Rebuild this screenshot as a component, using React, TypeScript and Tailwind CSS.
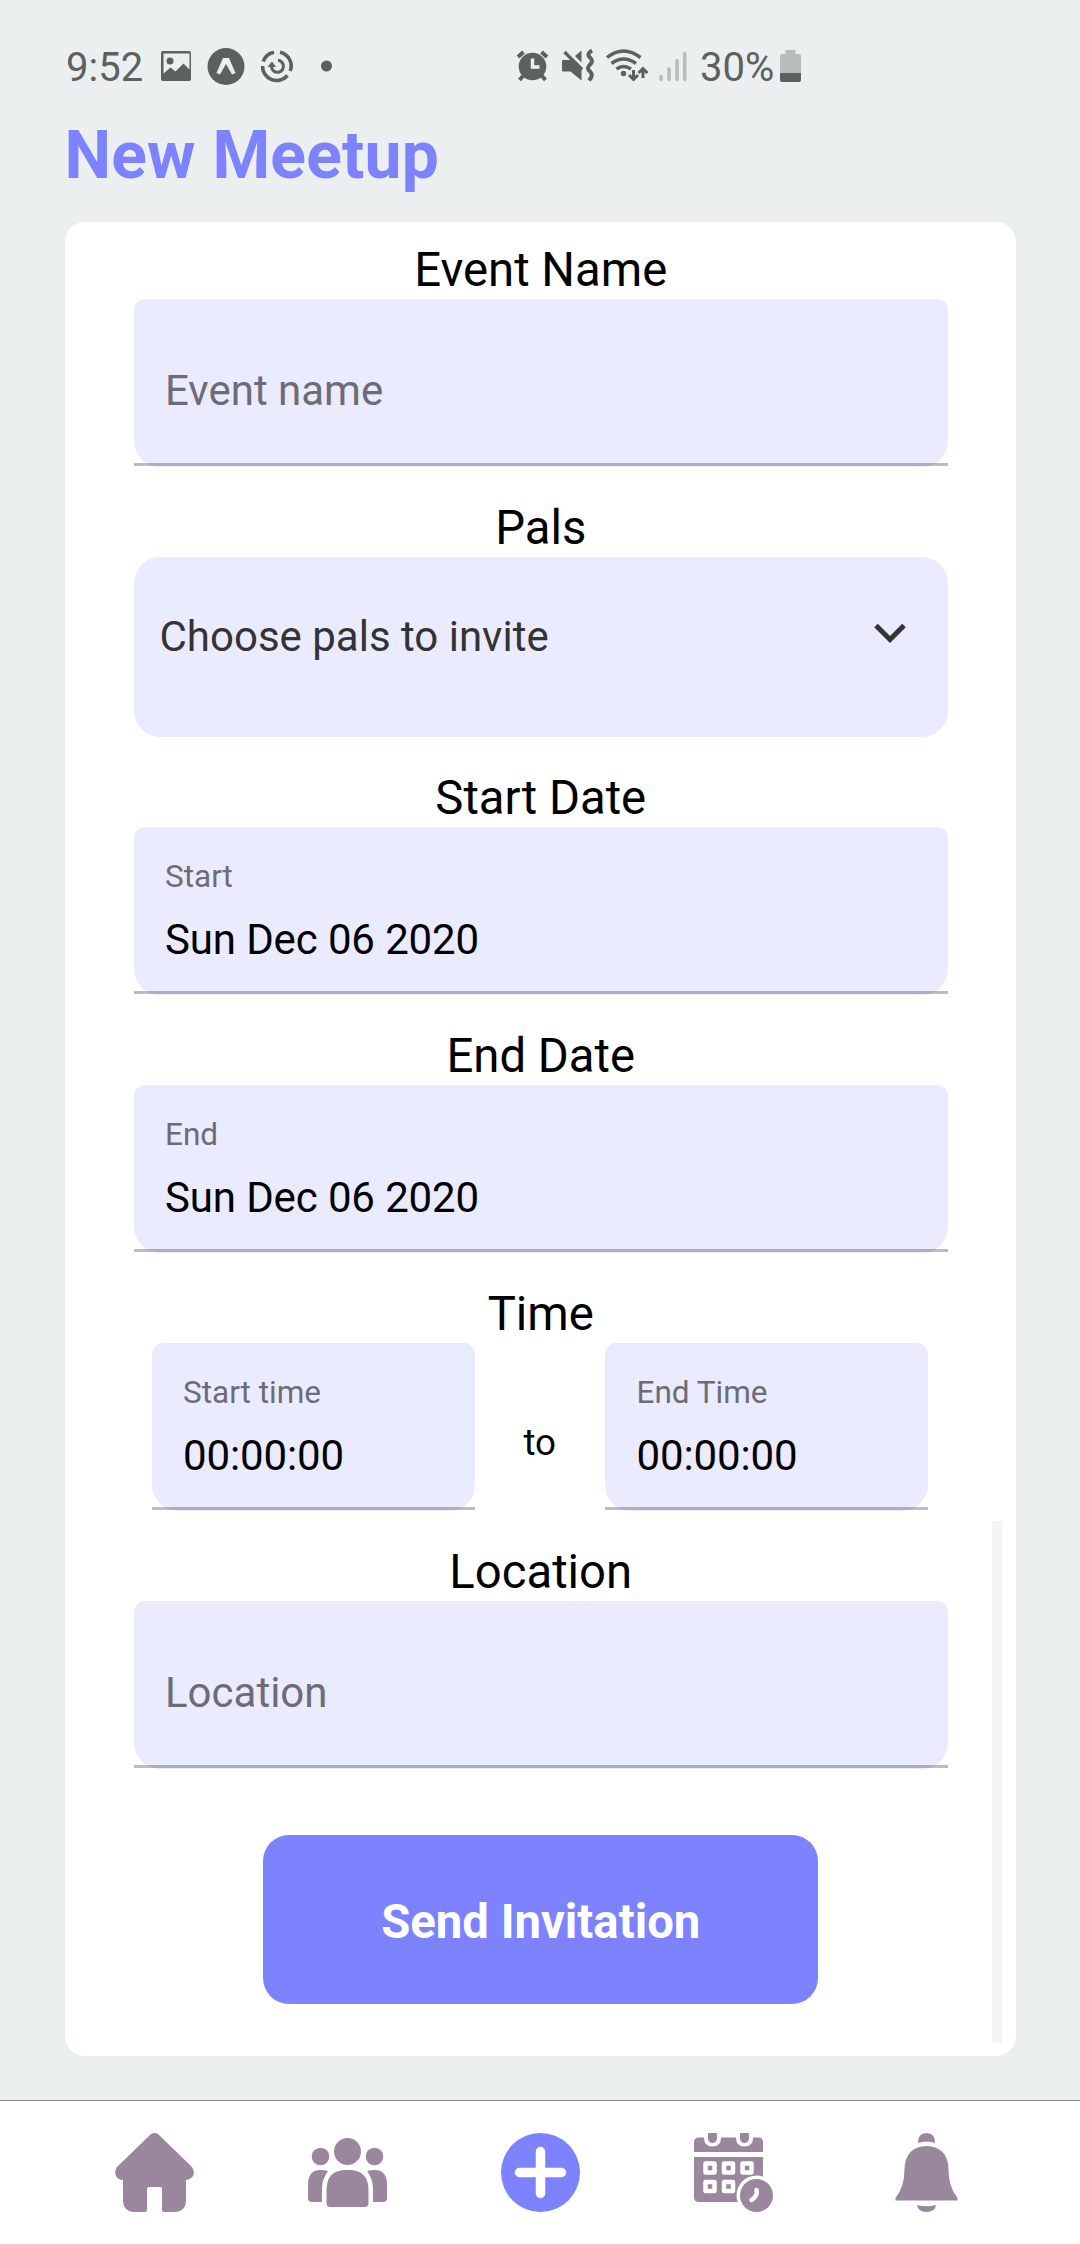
import React from "react";

const line = "absolute inset-x-0 bottom-px h-[3px] bg-black/26";

function Label({ children }: { children: React.ReactNode }) {
  return (
    <div className="h-[62px] pt-[2px] text-center text-[47.25px] leading-[62px] text-black">
      {children}
    </div>
  );
}

function Field({ hint, value }: { hint: string; value?: string }) {
  return (
    <div className="relative flex h-[168px] flex-col rounded-t-[11px] rounded-b-[26px] bg-[#ebebff] pl-[31.5px] whitespace-nowrap">
      {value ? (
        <>
          <span className="mt-[31px] text-[31.5px] leading-[38px] text-[#6d6c76]">{hint}</span>
          <span className="mt-[17px] text-[42px] leading-[54px] tracking-[-0.13px] text-black">{value}</span>
        </>
      ) : (
        <span className="mt-[65px] text-[42px] leading-[54px] text-[#6d6c76]">{hint}</span>
      )}
      <div className={line} />
    </div>
  );
}

function StatusBar() {
  return (
    <div className="flex h-[110px] shrink-0 pl-[66px] pt-[44px] text-[#5c605f]">
      <span className="w-[94px] pt-px text-[40px] leading-[46px]">9:52</span>
      <svg className="h-[46px] w-[190px]" viewBox="160 44 190 46" fill="currentColor">
        <path fillRule="evenodd" d="M163 51h26q2 0 2 2v26q0 2-2 2h-26q-2 0-2-2v-26q0-2 2-2zM163.500 53.500v20l7-6 5 4 8-8 6 6v-16z" />
        <circle cx="170" cy="61" r="3.500" />
        <circle cx="226" cy="66.500" r="18.500" />
        <path d="M223 58h6l6.500 15-3.500 1.500-6-10.500-6 10.500-3.500-1.500z" fill="#ebeff0" />
        <g fill="none" stroke="currentColor">
          <path d="M263.200 61.500A14.200 14.200 0 0 1 274 52.200M280 52.200A14.200 14.200 0 0 1 290.300 71M287.500 75.500A14.200 14.200 0 0 1 262.500 66" strokeWidth="3.600" />
          <path d="M271.500 65.500A6 6 0 1 0 278 60.300" strokeWidth="3" />
        </g>
        <path d="M267.500 67l4.500-5.500 4 5.500z" />
        <circle cx="326.500" cy="66" r="5.500" />
      </svg>
      <svg className="ml-[164px] h-[46px] w-[186px]" viewBox="514 44 186 46" fill="currentColor">
        <circle cx="532.500" cy="66.500" r="13.800" />
        <path d="M518 57l5.500-5M547 57l-5.500-5M523.500 75.500l-4 4.500M541.500 75.500l4 4.500" stroke="currentColor" strokeWidth="4" />
        <path d="M532.500 58.500v8.500h7" fill="none" stroke="#ebeff0" strokeWidth="3.500" />
        <path d="M563 60h8l2.500-1 8 8v13.500l-11-9h-7.500q-1 0-1-1v-9.500q0-1 1-1zM575 56l6.500-5.500v12z" />
        <path d="M564.500 52l17.500 17.500" stroke="currentColor" strokeWidth="3.200" />
        <path d="M592 50.500q-6 3.500-2 7t0 7q-4 3.500 0 7t-1 9" fill="none" stroke="currentColor" strokeWidth="4" />
        <g fill="none" stroke="currentColor" strokeWidth="3.500">
          <path d="M607 57.500Q623.500 44.500 640.500 57.500M611.500 63.500Q623.500 54.500 636 63.500M616.500 69Q623.500 64 631 69" />
          <path d="M633.500 70v9M629 75l4.500 4.500 4.500-4.500M643 78v-9M638.500 73l4.500-4.500 4.500 4.500" strokeWidth="3" />
        </g>
        <circle cx="623.500" cy="73.500" r="2.700" />
        <path d="M661 76.500v3M669 69v10.500M677 60.500v19M684.700 53.500v26" stroke="#b8bcbc" strokeWidth="3.600" strokeLinecap="round" />
      </svg>
      <span className="w-[79px] pt-px text-[40px] leading-[46px]">30%</span>
      <svg className="h-[46px] w-[24px]" viewBox="779 44 24 46">
        <path d="M785.500 50h10v4h3.500q2 0 2 2v17h-21v-17q0-2 2-2h3.500z" fill="#b8bcbc" />
        <path d="M780 73h21v7q0 2-2 2h-17q-2 0-2-2z" fill="#5c605f" />
      </svg>
    </div>
  );
}

function Nav() {
  const size = "h-[79px] w-[79px]";
  const tint = "#9a869d";
  return (
    <nav className="flex h-[144px] shrink-0 justify-between border-t border-[#888] bg-white pr-[114px] pl-[115px] pt-[32px]">
      <svg className={size} viewBox="0 0 79 79" fill={tint}>
        <path d="M36 1q3.500-2 7 0l34 33q3 5 1 9-3 4-7 4v22q-1 9-10 10h-12q-2 0-2-2v-21q0-2-2-2h-11q-2 0-2 2v21q0 2-2 2h-12q-9-1-10-10V47q-5 0-7-4-2-5 1-9z" />
      </svg>
      <svg className={size} viewBox="0 0 79 79" fill={tint}>
        <circle cx="39.500" cy="18.500" r="13.500" />
        <circle cx="12.500" cy="23.500" r="8.800" />
        <circle cx="66.500" cy="23.500" r="8.800" />
        <path d="M18.500 57q0-20 20-20h2q20 0 20 20v13q0 4-4 4h-34q-4 0-4-4zM20 38q-6 8-6 18v13H4q-4 0-4-4V50Q1 37 12 37q5 0 8 1zM59 38q6 8 6 18v13h10q4 0 4-4V50Q78 37 67 37q-5 0-8 1z" />
      </svg>
      <svg className={size} viewBox="0 0 79 79">
        <circle cx="39.500" cy="39.500" r="39.500" fill="#7d82ff" />
        <path d="M39.500 18.500v42M18.500 39.500h42" stroke="#fff" strokeWidth="9.500" strokeLinecap="round" />
      </svg>
      <svg className={size} viewBox="0 0 79 79" fill={tint}>
        <path d="M5 4.500h59q5 0 5 5V19H0V9.500q0-5 5-5zM0 24h69v45H5q-5 0-5-5z" />
        <path d="M10 0v5q0 8.500 8.500 8.500T27 5V0zM42 0v5q0 8.500 8.500 8.500T59 5V0z" fill="#fff" />
        <path d="M14 0v6q1 4 4.500 4T23 6V0zM46 0v6q1 4 4.500 4T55 6V0z" />
        <path d="M11.500 30.500h9v9h-9zM30 30.500h9v9h-9zM48.500 30.500h9v9h-9zM11.500 49h9v9h-9zM30 49h9v9h-9z" stroke="#fff" strokeWidth="4.500" strokeLinejoin="round" />
        <circle cx="62.500" cy="62.500" r="20" fill="#fff" />
        <circle cx="62.500" cy="62.500" r="16.500" />
        <path d="M62.500 57q1.500 6-5 10" fill="none" stroke="#fff" strokeWidth="4.500" strokeLinecap="round" />
      </svg>
      <svg className={size} viewBox="0 0 79 79" fill={tint}>
        <path d="M31 10Q31 0 39.500 0T48 10Q39.500 7 31 10zM30 72q9.500 2.500 19 0-1 7-9.500 7T30 72zM39.500 13Q61 14 61.500 36q0 18 9 29v2.500H8.500V65q9-11 9-29Q18 14 39.500 13z" />
      </svg>
    </nav>
  );
}

export default function App() {
  return (
    <div className="flex h-[2244px] w-[1080px] flex-col overflow-hidden bg-[#ebeff0] font-[Roboto,sans-serif]">
      <StatusBar />
      <h1 className="h-[112px] shrink-0 pt-[2px] pl-[64.500px] text-[66px] leading-[88px] font-bold tracking-[0.2px] text-[#7d82ff]">
        New Meetup
      </h1>
      <main className="relative mx-[64.500px] flex h-[1834px] shrink-0 flex-col rounded-[20px] bg-white pr-[67.500px] pl-[69px] pt-[15px]">
        <Label>Event Name</Label>
        <Field hint="Event name" />
        <div className="h-[28px]" />
        <Label>Pals</Label>
        <div className="flex h-[180px] justify-between rounded-[26px] bg-[#ebebff] pl-[26px] pr-[40px] pt-[52px]">
          <span className="pt-px text-[42px] leading-[54px] text-[#333]">Choose pals to invite</span>
          <svg className="mt-[13px] h-[22px] w-[36px]" viewBox="0 0 36 22" fill="none" stroke="#333" strokeWidth="5">
            <path d="M4 3.500l14 14 14-14" />
          </svg>
        </div>
        <div className="h-[28px]" />
        <Label>Start Date</Label>
        <Field hint="Start" value="Sun Dec 06 2020" />
        <div className="h-[28px]" />
        <Label>End Date</Label>
        <Field hint="End" value="Sun Dec 06 2020" />
        <div className="h-[28px]" />
        <Label>Time</Label>
        <div className="flex items-center justify-between pr-[20px] pl-[18px]">
          <div className="w-[323px]">
            <Field hint="Start time" value="00:00:00" />
          </div>
          <span className="mt-[32px] text-[36.750px] leading-[44px] text-black">to</span>
          <div className="w-[323px]">
            <Field hint="End Time" value="00:00:00" />
          </div>
        </div>
        <div className="h-[28px]" />
        <Label>Location</Label>
        <Field hint="Location" />
        <button className="mt-[66px] h-[169px] w-[555px] self-center rounded-[26px] bg-[#7d82ff] pt-[5px] text-[47.250px] font-bold text-white">
          Send Invitation
        </button>
        <div className="absolute top-[1299px] right-[13.500px] h-[522px] w-[10.500px] bg-[#f4f4f4]" />
      </main>
      <div className="grow" />
      <Nav />
    </div>
  );
}
